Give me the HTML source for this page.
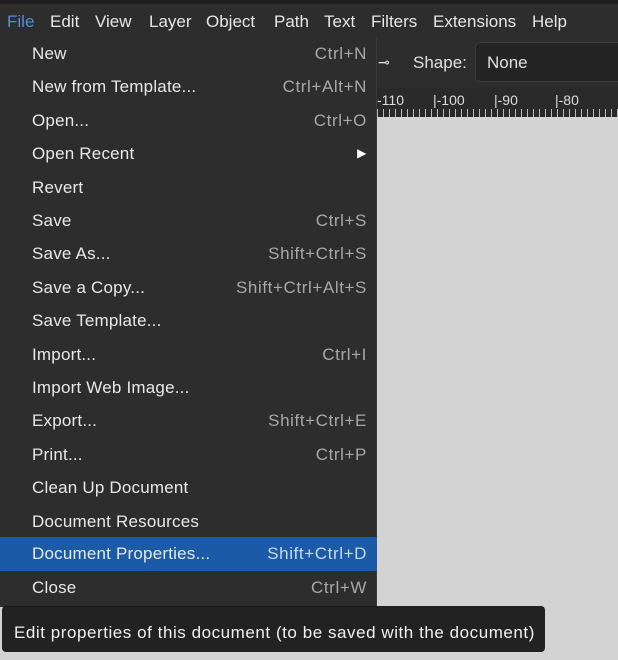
<!DOCTYPE html>
<html><head><style>
*{margin:0;padding:0;box-sizing:border-box}
body{width:618px;height:660px;overflow:hidden;background:#d3d3d3;font-family:"Liberation Sans",sans-serif;position:relative}
.top{position:absolute;left:0;top:0;width:618px;height:4px;background:#1e1e1e}
.mb{position:absolute;left:0;top:4px;width:618px;height:36px;background:#2d2d2d;color:#e6e6e6;font-size:17px}
.mb span{position:absolute;top:8px}
.tb{position:absolute;left:0;top:40px;width:618px;height:48px;background:#2d2d2d;color:#e0e0e0;font-size:17px}
.ruler{position:absolute;left:377px;top:88px;width:241px;height:29px;background:#2a2a2a;color:#ddd;font-size:14px}
.menu{position:absolute;left:0;top:37px;width:377px;height:570px;background:#2d2d2d;border-right:1px solid #3a3a3a}
.it{position:absolute;left:0;width:377px;height:33px;color:#e8e8e8;font-size:17px;letter-spacing:0.2px}
.it .l{position:absolute;left:32px;top:7px}
.it .r{position:absolute;right:10px;top:7px;color:#a8a8a8;letter-spacing:0.6px}
.hl{background:#1a5aa6}
.hl .r{color:#c8d8ee}
.tip{position:absolute;left:2px;top:606px;width:543px;height:46px;background:rgba(20,20,20,0.93);border-radius:4px;color:#f0f0f0;font-size:17px;padding:17px 0 0 12px;letter-spacing:0.55px}
.quit{position:absolute;left:32px;top:612px;color:#555;font-size:17px}
</style></head><body>
<div class="top"></div>
<div class="mb">
<span style="left:7px;color:#4f8fd8">File</span>
<div style="position:absolute;left:0;top:33px;width:36px;height:2px;background:#3b78c8"></div>
<span style="left:50px">Edit</span><span style="left:95px">View</span><span style="left:149px">Layer</span><span style="left:206px">Object</span><span style="left:274px">Path</span><span style="left:324px">Text</span><span style="left:371px">Filters</span><span style="left:433px">Extensions</span><span style="left:532px">Help</span>
</div>
<div class="tb">
<span style="position:absolute;left:378px;top:14px;font-size:14px">⊸</span>
<span style="position:absolute;left:413px;top:13px">Shape:</span>
<div style="position:absolute;left:475px;top:2px;width:150px;height:40px;background:#242424;border:1px solid #3c3c3c;border-radius:5px"><span style="position:absolute;left:11px;top:10px">None</span></div>
</div>
<div class="ruler">
<span style="position:absolute;left:0;top:4px">-110</span>
<span style="position:absolute;left:56px;top:4px">|-100</span>
<span style="position:absolute;left:117px;top:4px">|-90</span>
<span style="position:absolute;left:178px;top:4px">|-80</span>
<div style="position:absolute;left:0;bottom:0;width:241px;height:8px;background:repeating-linear-gradient(90deg,#bbb 0 1px,transparent 1px 6px)"></div>
</div>
<div class="menu">
<div class="it" style="top:0"><span class="l">New</span><span class="r">Ctrl+N</span></div>
<div class="it" style="top:33.4px"><span class="l">New from Template...</span><span class="r">Ctrl+Alt+N</span></div>
<div class="it" style="top:66.8px"><span class="l">Open...</span><span class="r">Ctrl+O</span></div>
<div class="it" style="top:100.2px"><span class="l">Open Recent</span><span class="r" style="color:#fff;font-size:12px;top:9px">▶</span></div>
<div class="it" style="top:133.6px"><span class="l">Revert</span></div>
<div class="it" style="top:167px"><span class="l">Save</span><span class="r">Ctrl+S</span></div>
<div class="it" style="top:200.4px"><span class="l">Save As...</span><span class="r">Shift+Ctrl+S</span></div>
<div class="it" style="top:233.8px"><span class="l">Save a Copy...</span><span class="r">Shift+Ctrl+Alt+S</span></div>
<div class="it" style="top:267.2px"><span class="l">Save Template...</span></div>
<div class="it" style="top:300.6px"><span class="l">Import...</span><span class="r">Ctrl+I</span></div>
<div class="it" style="top:334px"><span class="l">Import Web Image...</span></div>
<div class="it" style="top:367.4px"><span class="l">Export...</span><span class="r">Shift+Ctrl+E</span></div>
<div class="it" style="top:400.8px"><span class="l">Print...</span><span class="r">Ctrl+P</span></div>
<div class="it" style="top:434.2px"><span class="l">Clean Up Document</span></div>
<div class="it" style="top:467.6px"><span class="l">Document Resources</span></div>
<div class="it hl" style="top:500px;height:34px"><span class="l">Document Properties...</span><span class="r">Shift+Ctrl+D</span></div>
<div class="it" style="top:534.4px"><span class="l">Close</span><span class="r">Ctrl+W</span></div>
</div>
<div class="tip">Edit properties of this document (to be saved with the document)</div>
</body></html>
